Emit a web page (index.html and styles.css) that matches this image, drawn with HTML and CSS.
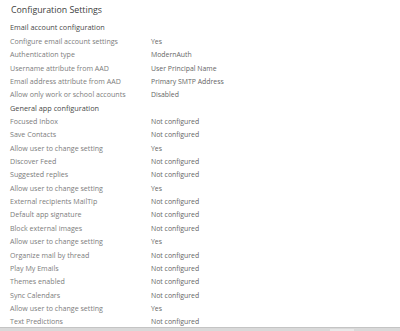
FILE: index.html
```html
<!DOCTYPE html>
<html>
<head>
<meta charset="utf-8">
<link rel="stylesheet" href="styles.css">
</head>
<body>
<div class="page">
  <div class="title">Configuration Settings</div>
  <div class="section first">Email account configuration</div>
  <div class="grid">
    <div class="label">Configure email account settings</div><div class="value">Yes</div>
    <div class="label">Authentication type</div><div class="value">ModernAuth</div>
    <div class="label">Username attribute from AAD</div><div class="value">User Principal Name</div>
    <div class="label">Email address attribute from AAD</div><div class="value">Primary SMTP Address</div>
    <div class="label">Allow only work or school accounts</div><div class="value">Disabled</div>
  </div>
  <div class="section">General app configuration</div>
  <div class="grid">
    <div class="label">Focused Inbox</div><div class="value">Not configured</div>
    <div class="label">Save Contacts</div><div class="value">Not configured</div>
    <div class="label">Allow user to change setting</div><div class="value">Yes</div>
    <div class="label">Discover Feed</div><div class="value">Not configured</div>
    <div class="label">Suggested replies</div><div class="value">Not configured</div>
    <div class="label">Allow user to change setting</div><div class="value">Yes</div>
    <div class="label">External recipients MailTip</div><div class="value">Not configured</div>
    <div class="label">Default app signature</div><div class="value">Not configured</div>
    <div class="label">Block external images</div><div class="value">Not configured</div>
    <div class="label">Allow user to change setting</div><div class="value">Yes</div>
    <div class="label">Organize mail by thread</div><div class="value">Not configured</div>
    <div class="label">Play My Emails</div><div class="value">Not configured</div>
    <div class="label">Themes enabled</div><div class="value">Not configured</div>
    <div class="label">Sync Calendars</div><div class="value">Not configured</div>
    <div class="label">Allow user to change setting</div><div class="value">Yes</div>
    <div class="label">Text Predictions</div><div class="value">Not configured</div>
  </div>
</div>
<div class="footer"><div class="footer-tab"></div></div>
</body>
</html>
```
FILE: styles.css
```css
html, body {
  margin: 0;
  padding: 0;
  background: #ffffff;
  overflow: hidden;
  height: 331px;
}
body {
  font-family: "Open Sans", "Noto Sans", sans-serif;
  font-size: 7.1px;
  display: flex;
  flex-direction: column;
}
.page {
  padding-left: 10px;
  height: 327px;
  overflow: hidden;
  flex: none;
}
.title {
  font-size: 8.8px;
  color: #404040;
  height: 20px;
  line-height: 20px;
  padding-left: 1px;
}
.section {
  color: #4a4a4a;
  font-size: 7.3px;
  height: 13.35px;
  line-height: 13.35px;
}
.section.first {
  height: 15px;
  line-height: 15px;
}
.grid {
  display: grid;
  grid-template-columns: 141px auto;
  grid-auto-rows: 13.35px;
  line-height: 13.35px;
}
.label {
  color: #7d7d7d;
  white-space: nowrap;
}
.value {
  color: #666666;
  font-size: 6.9px;
  white-space: nowrap;
}
.footer {
  flex: 1;
  background: #d9d9d9;
  border-top: 1px solid #c4c4c4;
  display: flex;
  justify-content: flex-end;
  align-items: flex-end;
  padding-right: 46px;
}
.footer-tab {
  width: 24px;
  height: 2px;
  background: #e8e8e8;
}
```
